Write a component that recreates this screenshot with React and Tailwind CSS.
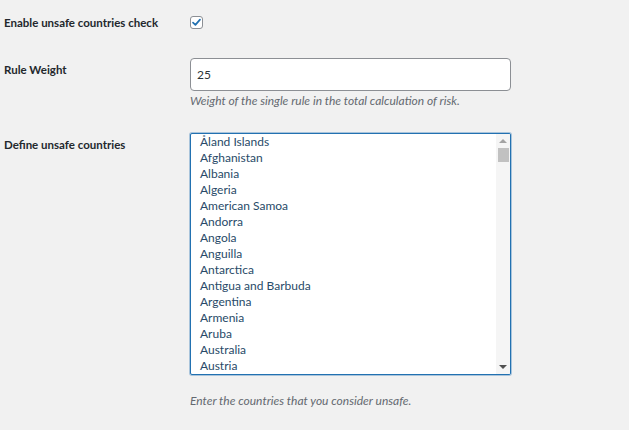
import React from 'react';

const countries = [
  'Åland Islands',
  'Afghanistan',
  'Albania',
  'Algeria',
  'American Samoa',
  'Andorra',
  'Angola',
  'Anguilla',
  'Antarctica',
  'Antigua and Barbuda',
  'Argentina',
  'Armenia',
  'Aruba',
  'Australia',
  'Austria',
];

export default function App() {
  return (
    <div className="min-h-screen w-full bg-[#f1f1f1] text-[11.5px] text-[#23282d] font-['Lato',_Arial,_sans-serif]">
      {/* enable check */}
      <div className="flex pt-[14px]">
        <div className="w-[190px] pl-1 mt-[1px] leading-[16px] font-bold whitespace-nowrap">
          Enable unsafe countries check
        </div>
        <div className="mt-[2px]">
          <div className="flex h-[13px] w-[13px] items-center justify-center rounded-[3px] border border-[#8c8f94] bg-white">
            <svg viewBox="0 0 12 12" className="h-[11px] w-[11px]">
              <path d="M2.2 6.2 L4.8 8.6 L9.8 2.8" fill="none" stroke="#2271b1" strokeWidth="1.9" strokeLinecap="round" strokeLinejoin="round" />
            </svg>
          </div>
        </div>
      </div>

      {/* rule weight */}
      <div className="mt-[27px] flex">
        <div className="w-[190px] pl-1 mt-[4px] leading-[16px] font-bold">Rule Weight</div>
        <div>
          <div className="flex h-[33px] w-[321px] items-center rounded-[4px] border border-[#8c8f94] bg-white px-[6px] text-[12px] text-[#2c3338]">
            25
          </div>
          <p className="mt-[1px] leading-[18px] text-[12px] italic text-[#646970]">
            Weight of the single rule in the total calculation of risk.
          </p>
        </div>
      </div>

      {/* countries */}
      <div className="mt-[23px] flex">
        <div className="w-[190px] pl-1 mt-[4px] leading-[16px] font-bold">Define unsafe countries</div>
        <div>
          <div className="flex h-[242px] w-[321px] overflow-hidden rounded-[2px] border border-[#2271b1] bg-white shadow-[0_0_0_1px_rgba(34,113,177,0.35)]">
            <ul className="flex-1 overflow-hidden pl-[9px] text-[12px] text-[#284a68]">
              {countries.map((c) => (
                <li key={c} className="h-[16px] leading-[16px] whitespace-nowrap">
                  {c}
                </li>
              ))}
            </ul>
            <div className="flex w-[14px] flex-col items-center bg-[#f5f5f5]">
              <div className="flex h-[12px] w-full items-center justify-center pt-[2px]">
                <div className="h-0 w-0 border-x-[4px] border-b-[4px] border-x-transparent border-b-[#a3a3a3]" />
              </div>
              <div className="mt-[2px] h-[14px] w-[11px] bg-[#c1c1c1]" />
              <div className="flex-1" />
              <div className="flex h-[14px] w-full items-center justify-center">
                <div className="h-0 w-0 border-x-[4px] border-t-[4px] border-x-transparent border-t-[#505050]" />
              </div>
            </div>
          </div>
          <p className="mt-[17px] leading-[18px] text-[12px] italic text-[#646970]">
            Enter the countries that you consider unsafe.
          </p>
        </div>
      </div>
    </div>
  );
}
